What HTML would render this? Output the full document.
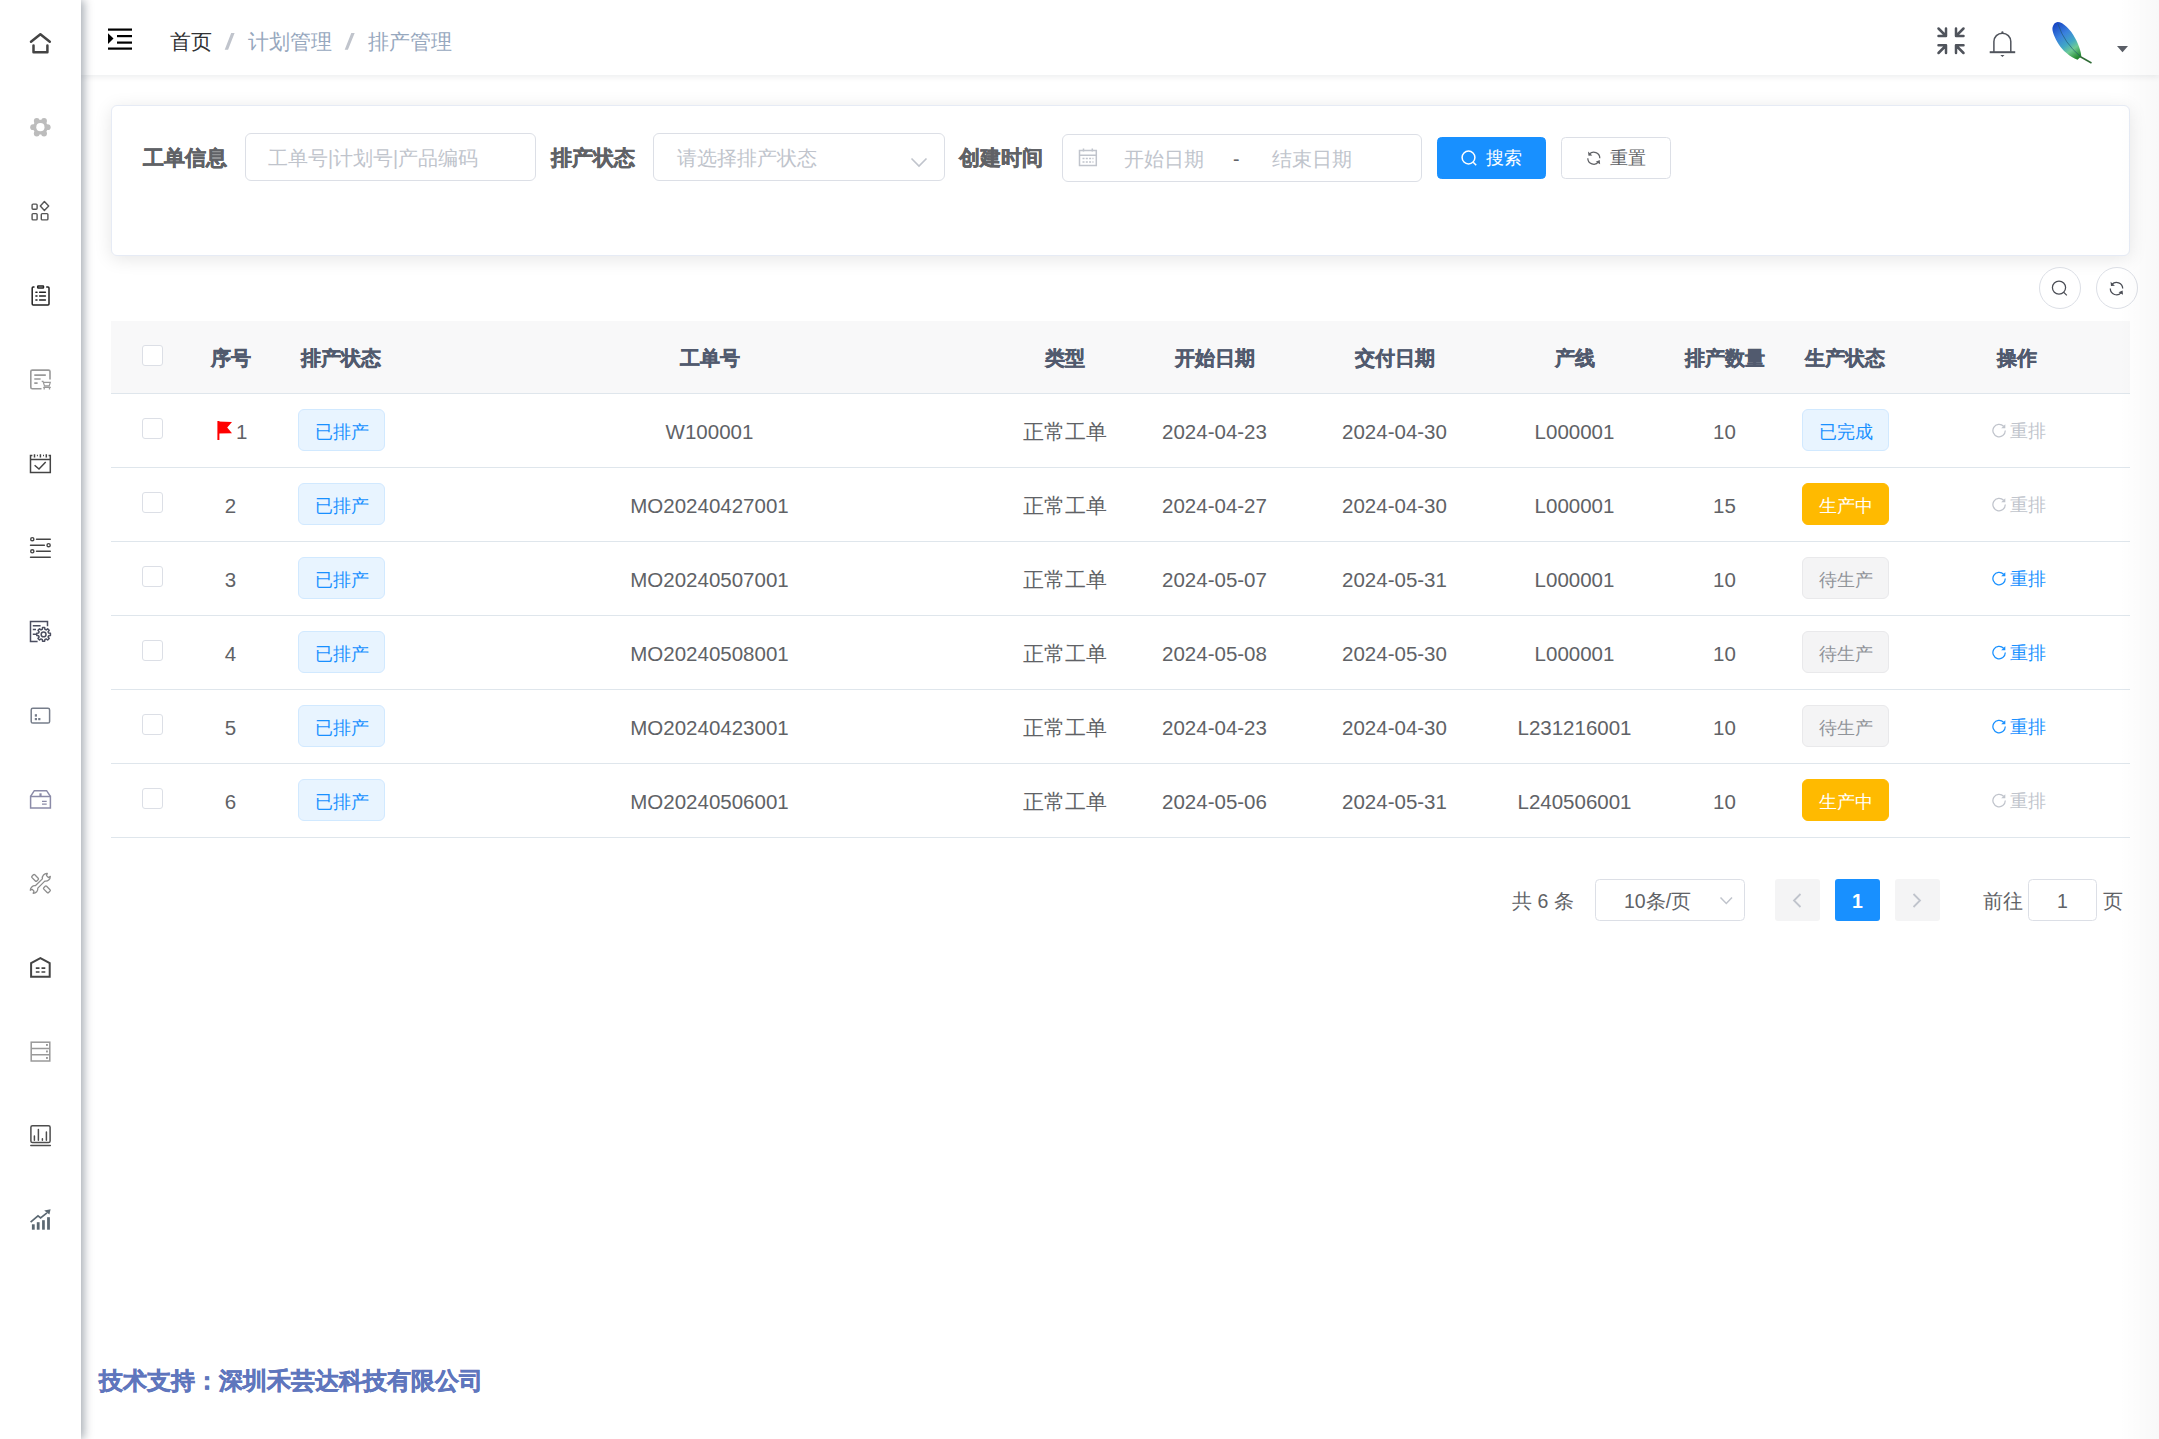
<!DOCTYPE html>
<html><head><meta charset="utf-8">
<style>
*{box-sizing:border-box;margin:0;padding:0}
html,body{width:2159px;height:1439px;overflow:hidden;background:#fff;font-family:"Liberation Sans",sans-serif;color:#606266}
.a{position:absolute}
#side{left:0;top:0;width:81px;height:1439px;background:#fff;box-shadow:3px 0 9px rgba(0,21,41,.35);z-index:5}
#nav{left:81px;top:0;width:2078px;height:75px;background:#fff;box-shadow:0 1.5px 6px rgba(0,21,41,.08);z-index:3}
.ic{z-index:6}
.bc{font-size:21px;top:28px;line-height:28px;white-space:nowrap;z-index:4}
.sl{color:#c0c4cc;font-weight:bold}
#card{left:111px;top:105px;width:2019px;height:150.5px;border:1.5px solid #e6ebf5;border-radius:6px;background:#fff;box-shadow:0 3px 18px rgba(0,0,0,.1)}
.lbl{font-size:21px;font-weight:bold;-webkit-text-stroke:0.45px #606266;color:#606266;top:144px;line-height:28px;white-space:nowrap}
.inp{top:133px;height:48px;border:1.5px solid #dcdfe6;border-radius:6px;background:#fff}
.ph{font-size:19.5px;color:#c0c4cc;line-height:28px;white-space:nowrap}
.btn{top:137px;height:42px;border-radius:4.5px}
.bt{top:144px;font-size:18px;line-height:28px;white-space:nowrap}
.circ{top:267px;width:42px;height:42px;border:1.5px solid #dcdfe6;border-radius:50%;background:#fff}
#thead{left:111px;top:321px;width:2019px;height:73px;background:#f8f8f9;border-bottom:1.5px solid #dfe6ec}
.rowline{left:111px;width:2019px;height:1.5px;background:#dfe6ec}
.th{font-size:19.5px;font-weight:bold;-webkit-text-stroke:0.45px #515a6e;color:#515a6e;line-height:28px;white-space:nowrap;text-align:center;width:240px}
.td{font-size:20.5px;color:#606266;line-height:28px;white-space:nowrap;text-align:center;width:240px}
.cb{left:142px;width:21px;height:21px;border:1.5px solid #dcdfe6;border-radius:3px;background:#fff}
.tag{height:42px;border-radius:6px;font-size:18px;line-height:40px;padding-top:1.5px;text-align:center;white-space:nowrap;width:87px;border:1.5px solid}
.tp{background:#e8f4ff;border-color:#d1e9ff;color:#1890ff}
.tw{background:#ffba00;border-color:#ffba00;color:#fff}
.ti{background:#f4f4f5;border-color:#e9e9eb;color:#909399}
.op{font-size:18px;line-height:28px;white-space:nowrap}
.pg{font-size:19.5px;color:#606266;line-height:28px;white-space:nowrap}

</style></head><body>

<div id="side" class="a"></div>
<div id="nav" class="a"></div>

<svg class="a ic" style="left:0;top:0;pointer-events:none" width="2159" height="1439" viewBox="0 0 2159 1439">
<g transform="translate(20,23)" fill="none" stroke="#444" stroke-width="2.5" stroke-linecap="round" stroke-linejoin="round"><path d="M11 18.7 L20.4 11.2 L29.8 18.7"/><path d="M13.5 22.6 V29.3 H27.4 V22.6"/></g>
<g transform="translate(20,107)" fill="#bcbcbc"><circle cx="20.4" cy="20.2" r="7.4"/><circle cx="27.70" cy="20.20" r="2.9"/><circle cx="24.05" cy="26.52" r="2.9"/><circle cx="16.75" cy="26.52" r="2.9"/><circle cx="13.10" cy="20.20" r="2.9"/><circle cx="16.75" cy="13.88" r="2.9"/><circle cx="24.05" cy="13.88" r="2.9"/><circle cx="20.4" cy="20.2" r="4.1" fill="#fff"/></g>
<g transform="translate(20,191)" fill="none" stroke="#555" stroke-width="1.4" stroke-linejoin="round"><rect x="12.1" y="13.1" width="5" height="5.1" rx="1"/><path d="M20.3 15 L24.4 10.6 L28.7 15 L24.4 19.4 Z"/><rect x="12.1" y="22.6" width="5" height="6.3" rx="1"/><rect x="21.3" y="22.6" width="6.6" height="6.3" rx="1"/></g>
<g transform="translate(20,275)" fill="none" stroke="#222" stroke-width="1.5"><path d="M14.5 11.9 H13.2 Q12.2 11.9 12.2 12.9 V29 Q12.2 30 13.2 30 H28 Q29 30 29 29 V12.9 Q29 11.9 28 11.9 H26.2"/><rect x="17.7" y="11" width="5.8" height="1.9" rx="0.5"/><path d="M15.9 17.3 H17 M19.6 17.3 H25.4 M15.9 21.1 H17 M19.6 21.1 H25.4 M15.9 25 H17 M19.6 25 H25.4" stroke-linecap="round"/></g>
<g transform="translate(20,359)" fill="none" stroke="#9a9a9a" stroke-width="1.6"><path d="M21.5 29.7 H12.3 Q10.8 29.7 10.8 28.2 V12.6 Q10.8 11.1 12.3 11.1 H28.5 Q30 11.1 30 12.6 V20.5"/><path d="M14.3 16.1 H25.8 M14.3 20 H20.6 M14.3 24.1 H17.6"/><path d="M21.7 22.3 H23 L24.5 26.9 H29.2 L30.3 23.4 H23.5 M23.3 28.3 H30.8" stroke-width="1.2"/><path d="M24.2 28.3 V30.5 M29.5 28.3 V30.5" stroke-width="1.3"/></g>
<g transform="translate(20,443)" fill="none" stroke="#444" stroke-width="1.5"><path d="M12.4 12.6 H10.5 V29.6 H30.3 V12.6 H28.6"/><path d="M10.5 16.5 H30.3"/><path d="M14.5 11.2 V14.4 M20.4 11.2 V14.4 M26.3 11.2 V14.4 M16.9 12.6 H17.9 M23 12.6 H24"/><path d="M14.6 22.2 L19 26 L25.7 19"/></g>
<g transform="translate(20,527)" fill="none" stroke="#444" stroke-width="1.4" stroke-linecap="round"><path d="M16.5 12.2 H30.3 M10.5 18.2 H24.4 M16.5 24.3 H30.3 M10.5 30.2 H30.3"/><circle cx="12.3" cy="12.2" r="1.6"/><circle cx="28.6" cy="18.2" r="1.6"/><circle cx="12.3" cy="24.3" r="1.6"/></g>
<g transform="translate(20,611)" fill="none" stroke="#4b4e60" stroke-width="1.5"><path d="M17.6 30.4 H10.5 V10.5 H27.5 V15.2"/><path d="M12.8 14.8 H20.6 M12.8 18.6 H16 M12.8 23.2 H16.4"/><path d="M28.40 21.41 L28.62 22.05 L30.42 22.32 L30.42 24.48 L28.62 24.75 L28.40 25.39 L28.10 26.00 L29.18 27.46 L27.66 28.98 L26.20 27.90 L25.59 28.20 L24.95 28.42 L24.68 30.22 L22.52 30.22 L22.25 28.42 L21.61 28.20 L21.00 27.90 L19.54 28.98 L18.02 27.46 L19.10 26.00 L18.80 25.39 L18.58 24.75 L16.78 24.48 L16.78 22.32 L18.58 22.05 L18.80 21.41 L19.10 20.80 L18.02 19.34 L19.54 17.82 L21.00 18.90 L21.61 18.60 L22.25 18.38 L22.52 16.58 L24.68 16.58 L24.95 18.38 L25.59 18.60 L26.20 18.90 L27.66 17.82 L29.18 19.34 L28.10 20.80 Z" stroke-linejoin="round"/><circle cx="23.6" cy="23.4" r="2.4"/></g>
<g transform="translate(20,695)" fill="#767d8a" stroke="none"><rect x="11.2" y="13.3" width="18.4" height="14.7" rx="1.6" fill="none" stroke="#767d8a" stroke-width="1.5"/><rect x="14.8" y="19.2" width="2.2" height="2.4"/><rect x="14.8" y="23" width="2.2" height="2.2"/><rect x="18.2" y="23" width="2.2" height="2.2"/></g>
<g transform="translate(20,779)" fill="none" stroke="#8b8ba8" stroke-width="1.5"><path d="M10.6 17.4 H30.4 V29.1 H10.6 Z"/><path d="M10.6 17.4 L14.3 11.7 H26.6 L30.4 17.4"/><path d="M20.5 14.3 V17.4" stroke-width="2.2"/><path d="M22 22.4 H26.7 M22 25.2 H26.7" stroke-width="1.3"/></g>
<g transform="translate(20,863)" fill="none" stroke="#8c8c8c" stroke-width="1.3" stroke-linejoin="round"><rect x="-3.4" y="-2" width="6.8" height="4" rx="1" transform="translate(15.1 14.9) rotate(45)"/><rect x="-3.4" y="-2" width="6.8" height="4" rx="1" transform="translate(26.9 26.4) rotate(45)"/><path d="M22.4 15.9 A4.6 4.6 0 0 1 27.3 10.5 L26.5 12.6 L28.4 14.5 L30.3 13.4 A4.6 4.6 0 0 1 24.8 18.1 L17.8 25.1 A4.6 4.6 0 0 1 13.2 30.3 L14 28.1 L12.1 26.3 L10.3 27.3 A4.6 4.6 0 0 1 15.3 22.7 Z"/></g>
<g transform="translate(20,947)"><path d="M11.1 29.7 V16 L20.4 11.2 L29.7 16 V29.7 Z" fill="none" stroke="#444" stroke-width="2" stroke-linejoin="miter"/><path d="M15.8 21.1 H19.5 M21.5 21.1 H25.3 M15.8 25 H19.5 M21.5 25 H25.3" stroke="#444" stroke-width="1.6"/></g>
<g transform="translate(20,1031)" fill="none" stroke="#999" stroke-width="1.5"><rect x="11.2" y="11.2" width="18.6" height="18.8"/><path d="M11.2 17.4 H29.8 M11.2 23.7 H29.8"/><g fill="#999" stroke="none"><rect x="26" y="13" width="1.9" height="1.9"/><rect x="26" y="19.5" width="1.9" height="1.9"/><rect x="26" y="26" width="1.9" height="1.9"/></g></g>
<g transform="translate(20,1115)" fill="none" stroke="#4d4d4d" stroke-width="1.5" stroke-linecap="round"><rect x="10.9" y="10.7" width="19.2" height="16.8" rx="1.6"/><path d="M10.8 30.4 H30.3"/><path d="M14.4 21 V25.3 M18.4 14.5 V25.3 M22.4 23.8 V25.3 M26.4 17.1 V25.3"/></g>
<g transform="translate(20,1199)" fill="#5b6872"><rect x="11.9" y="25.3" width="2.8" height="5.4"/><rect x="16.8" y="23.2" width="2.8" height="7.5"/><rect x="22.1" y="21.2" width="2.7" height="9.5"/><rect x="27.1" y="18.2" width="2.8" height="12.5"/><path d="M10.6 23.2 L18 16.8 L20.6 18.9 L27 13.8" fill="none" stroke="#5b6872" stroke-width="1.7"/><path d="M24.2 11.4 L30.6 10.2 L29.4 15.6 Z"/></g>
<g fill="#000"><rect x="108" y="28.5" width="24" height="2.2"/><rect x="117" y="35" width="15" height="2.2"/><rect x="117" y="41.5" width="15" height="2.2"/><rect x="108" y="47.5" width="24" height="2.2"/><path d="M108 33.2 L113.5 38.6 L108 44 Z"/></g>
<g fill="none" stroke="#50545c" stroke-width="2.5" stroke-linecap="round" stroke-linejoin="round"><path d="M1938.5 28.5 L1945.5 35.5 M1946 28.5 V36 H1938.5"/><path d="M1963.5 28.5 L1956.5 35.5 M1956 28.5 V36 H1963.5"/><path d="M1938.5 53 L1945.5 46 M1946 53 V45.3 H1938.5"/><path d="M1963.5 53 L1956.5 46 M1956 53 V45.3 H1963.5"/></g>
<g fill="none" stroke="#50545c" stroke-width="1.5"><path d="M1993.9 52 V41.6 A8.45 8.45 0 0 1 2010.8 41.6 V52"/><path d="M1989.7 52.2 H2015.2" stroke-width="2"/></g><circle cx="2002.4" cy="32.4" r="1.1" fill="#50545c"/><path d="M2000.3 55 H2004.5 L2002.4 57 Z" fill="#50545c"/>
<path d="M2117 46 H2128 L2122.5 52.3 Z" fill="#5a5e66"/>
<defs><linearGradient id="fg" gradientUnits="userSpaceOnUse" x1="2055" y1="24" x2="2080" y2="59"><stop offset="0" stop-color="#1846c4"/><stop offset="0.3" stop-color="#3a80de"/><stop offset="0.55" stop-color="#41a8c4"/><stop offset="0.72" stop-color="#6fcb94"/><stop offset="0.88" stop-color="#3a9c4a"/><stop offset="1" stop-color="#187a22"/></linearGradient></defs>
<path d="M2057.6 22.1 C2063 22 2071 30 2075 38 C2079 45 2081 52 2081.3 56.3 L2077.5 59.7 C2070 57 2062 50 2058.5 44 C2055 38 2051.5 31 2052.6 27 C2053.5 24 2055.5 22.2 2057.6 22.1 Z" fill="url(#fg)"/>
<path d="M2058 24 Q2064 43 2081 57" fill="none" stroke="#1e5670" stroke-width="0.8" opacity="0.8"/><path d="M2080 56.5 L2091.5 63" fill="none" stroke="#2f6b35" stroke-width="1.5"/>
<path d="M911.5 158.5 L919 166 L926.5 158.5" fill="none" stroke="#c0c4cc" stroke-width="1.6"/>
<g fill="none" stroke="#c0c4cc" stroke-width="1.5"><rect x="1079.5" y="150.5" width="16.8" height="15"/><path d="M1079.5 155.2 H1096.3 M1083.5 148.5 V151.5 M1092.3 148.5 V151.5"/><path d="M1082.5 158.5 H1093.5 M1082.5 162 H1093.5" stroke-dasharray="2 1.3"/></g>
<g fill="none" stroke="#fff" stroke-width="1.5"><circle cx="1468.5" cy="157.5" r="6.4"/><path d="M1473.2 162.2 L1476.2 165.2"/></g>
<g fill="none" stroke="#4a4d55" stroke-width="1.25"><circle cx="2059" cy="287.6" r="6.6"/><path d="M2063.8 292.4 L2066.8 295.4"/></g>
<g fill="none" stroke="#4a4d55" stroke-width="1.25"><path d="M2111.89 284.45 A6.2 6.2 0 0 1 2122.70 288.60"/><path d="M2110.30 288.60 A6.2 6.2 0 0 0 2121.39 292.42"/></g><path d="M2110.59 281.85 L2110.99 286.05 L2114.89 285.65 Z" fill="#4a4d55"/><path d="M2122.99 294.82 L2122.59 290.52 L2118.59 292.22 Z" fill="#4a4d55"/>
<g fill="none" stroke="#606266" stroke-width="1.25"><path d="M1589.34 154.19 A6.0 6.0 0 0 1 1599.80 158.20"/><path d="M1587.80 158.20 A6.0 6.0 0 0 0 1598.53 161.89"/></g><path d="M1588.04 151.59 L1588.44 155.79 L1592.34 155.39 Z" fill="#606266"/><path d="M1600.13 164.29 L1599.73 159.99 L1595.73 161.69 Z" fill="#606266"/>
<path d="M1800.5 894 L1794 900.5 L1800.5 907" fill="none" stroke="#c0c4cc" stroke-width="1.8"/>
<path d="M1913.5 894 L1920 900.5 L1913.5 907" fill="none" stroke="#c0c4cc" stroke-width="1.8"/>
<path d="M1720.5 897.5 L1726.3 903.5 L1732 897.5" fill="none" stroke="#c0c4cc" stroke-width="1.5"/>
</svg>

<div class="a bc" style="left:170px;color:#303133">首页</div>
<svg class="a" style="left:0;top:0;z-index:6" width="400" height="70"><path d="M224.7 49.7 H228.1 L234.6 33 H231.2 Z M344.7 49.7 H347.9 L354.7 33 H351.3 Z" fill="#c0c4cc"/></svg>
<div class="a bc" style="left:248px;color:#97a8be">计划管理</div>
<div class="a bc" style="left:368px;color:#97a8be">排产管理</div>
<div id="card" class="a"></div>
<div class="a lbl" style="left:143px">工单信息</div>
<div class="a inp" style="left:245px;width:291px"></div>
<div class="a ph" style="left:268px;top:144px">工单号|计划号|产品编码</div>
<div class="a lbl" style="left:551px">排产状态</div>
<div class="a inp" style="left:653px;width:292px"></div>
<div class="a ph" style="left:677px;top:144px">请选择排产状态</div>
<div class="a lbl" style="left:959px">创建时间</div>
<div class="a inp" style="left:1062px;top:134px;width:360px"></div>
<div class="a ph" style="left:1124px;top:145px">开始日期</div>
<div class="a ph" style="left:1233px;top:145px;color:#606266">-</div>
<div class="a ph" style="left:1272px;top:145px">结束日期</div>
<div class="a btn" style="left:1437px;width:109px;background:#1890ff;border:1.5px solid #1890ff"></div>
<div class="a btn" style="left:1561px;width:110px;border:1.5px solid #dcdfe6;background:#fff"></div>
<div class="a bt" style="left:1486px;color:#fff">搜索</div>
<div class="a bt" style="left:1610px;color:#606266">重置</div>
<div class="a circ" style="left:2039px"></div><div class="a circ" style="left:2096px"></div>
<div id="thead" class="a"></div>
<div class="a rowline" style="top:466.5px"></div>
<div class="a rowline" style="top:540.5px"></div>
<div class="a rowline" style="top:614.5px"></div>
<div class="a rowline" style="top:688.5px"></div>
<div class="a rowline" style="top:762.5px"></div>
<div class="a rowline" style="top:836.5px"></div>
<div class="a cb" style="top:345px"></div>
<div class="a th" style="left:110.5px;top:343.5px;">序号</div>
<div class="a th" style="left:221px;top:343.5px;">排产状态</div>
<div class="a th" style="left:589.5px;top:343.5px;">工单号</div>
<div class="a th" style="left:945px;top:343.5px;">类型</div>
<div class="a th" style="left:1094.5px;top:343.5px;">开始日期</div>
<div class="a th" style="left:1274.5px;top:343.5px;">交付日期</div>
<div class="a th" style="left:1454.5px;top:343.5px;">产线</div>
<div class="a th" style="left:1604.5px;top:343.5px;">排产数量</div>
<div class="a th" style="left:1725px;top:343.5px;">生产状态</div>
<div class="a th" style="left:1897px;top:343.5px;">操作</div>
<div class="a cb" style="top:418px"></div>
<svg class="a" style="left:217px;top:421px" width="16" height="20" viewBox="0 0 16 20"><rect x="0.4" y="0" width="2" height="19" fill="#f00"/><path d="M1 0.5 L15 0.9 L10.2 6.6 L15 12.2 L1 12.5 Z" fill="#f00"/></svg>
<div class="a td" style="left:236px;top:418px;width:auto;text-align:left">1</div>
<div class="a tag tp" style="left:298px;top:409px">已排产</div>
<div class="a td" style="left:589.5px;top:418px;">W100001</div>
<div class="a td" style="left:945px;top:418px;">正常工单</div>
<div class="a td" style="left:1094.5px;top:418px;">2024-04-23</div>
<div class="a td" style="left:1274.5px;top:418px;">2024-04-30</div>
<div class="a td" style="left:1454.5px;top:418px;">L000001</div>
<div class="a td" style="left:1604.5px;top:418px;">10</div>
<div class="a tag tp" style="left:1802px;top:409px">已完成</div>
<svg class="a" style="left:1992px;top:423px" width="15" height="15" viewBox="0 0 15 15"><path d="M11.6 3.3 A6.2 6.2 0 1 0 13.3 7.6" fill="none" stroke="#c0c4cc" stroke-width="1.25"/><path d="M13.3 1.2 L13.3 5.3 L9.2 5.3 Z" fill="#c0c4cc"/></svg>
<div class="a op" style="left:2009.5px;top:417px;color:#c0c4cc">重排</div>
<div class="a cb" style="top:492px"></div>
<div class="a td" style="left:110.5px;top:492px;">2</div>
<div class="a tag tp" style="left:298px;top:483px">已排产</div>
<div class="a td" style="left:589.5px;top:492px;">MO20240427001</div>
<div class="a td" style="left:945px;top:492px;">正常工单</div>
<div class="a td" style="left:1094.5px;top:492px;">2024-04-27</div>
<div class="a td" style="left:1274.5px;top:492px;">2024-04-30</div>
<div class="a td" style="left:1454.5px;top:492px;">L000001</div>
<div class="a td" style="left:1604.5px;top:492px;">15</div>
<div class="a tag tw" style="left:1802px;top:483px">生产中</div>
<svg class="a" style="left:1992px;top:497px" width="15" height="15" viewBox="0 0 15 15"><path d="M11.6 3.3 A6.2 6.2 0 1 0 13.3 7.6" fill="none" stroke="#c0c4cc" stroke-width="1.25"/><path d="M13.3 1.2 L13.3 5.3 L9.2 5.3 Z" fill="#c0c4cc"/></svg>
<div class="a op" style="left:2009.5px;top:491px;color:#c0c4cc">重排</div>
<div class="a cb" style="top:566px"></div>
<div class="a td" style="left:110.5px;top:566px;">3</div>
<div class="a tag tp" style="left:298px;top:557px">已排产</div>
<div class="a td" style="left:589.5px;top:566px;">MO20240507001</div>
<div class="a td" style="left:945px;top:566px;">正常工单</div>
<div class="a td" style="left:1094.5px;top:566px;">2024-05-07</div>
<div class="a td" style="left:1274.5px;top:566px;">2024-05-31</div>
<div class="a td" style="left:1454.5px;top:566px;">L000001</div>
<div class="a td" style="left:1604.5px;top:566px;">10</div>
<div class="a tag ti" style="left:1802px;top:557px">待生产</div>
<svg class="a" style="left:1992px;top:571px" width="15" height="15" viewBox="0 0 15 15"><path d="M11.6 3.3 A6.2 6.2 0 1 0 13.3 7.6" fill="none" stroke="#1890ff" stroke-width="1.25"/><path d="M13.3 1.2 L13.3 5.3 L9.2 5.3 Z" fill="#1890ff"/></svg>
<div class="a op" style="left:2009.5px;top:565px;color:#1890ff">重排</div>
<div class="a cb" style="top:640px"></div>
<div class="a td" style="left:110.5px;top:640px;">4</div>
<div class="a tag tp" style="left:298px;top:631px">已排产</div>
<div class="a td" style="left:589.5px;top:640px;">MO20240508001</div>
<div class="a td" style="left:945px;top:640px;">正常工单</div>
<div class="a td" style="left:1094.5px;top:640px;">2024-05-08</div>
<div class="a td" style="left:1274.5px;top:640px;">2024-05-30</div>
<div class="a td" style="left:1454.5px;top:640px;">L000001</div>
<div class="a td" style="left:1604.5px;top:640px;">10</div>
<div class="a tag ti" style="left:1802px;top:631px">待生产</div>
<svg class="a" style="left:1992px;top:645px" width="15" height="15" viewBox="0 0 15 15"><path d="M11.6 3.3 A6.2 6.2 0 1 0 13.3 7.6" fill="none" stroke="#1890ff" stroke-width="1.25"/><path d="M13.3 1.2 L13.3 5.3 L9.2 5.3 Z" fill="#1890ff"/></svg>
<div class="a op" style="left:2009.5px;top:639px;color:#1890ff">重排</div>
<div class="a cb" style="top:714px"></div>
<div class="a td" style="left:110.5px;top:714px;">5</div>
<div class="a tag tp" style="left:298px;top:705px">已排产</div>
<div class="a td" style="left:589.5px;top:714px;">MO20240423001</div>
<div class="a td" style="left:945px;top:714px;">正常工单</div>
<div class="a td" style="left:1094.5px;top:714px;">2024-04-23</div>
<div class="a td" style="left:1274.5px;top:714px;">2024-04-30</div>
<div class="a td" style="left:1454.5px;top:714px;">L231216001</div>
<div class="a td" style="left:1604.5px;top:714px;">10</div>
<div class="a tag ti" style="left:1802px;top:705px">待生产</div>
<svg class="a" style="left:1992px;top:719px" width="15" height="15" viewBox="0 0 15 15"><path d="M11.6 3.3 A6.2 6.2 0 1 0 13.3 7.6" fill="none" stroke="#1890ff" stroke-width="1.25"/><path d="M13.3 1.2 L13.3 5.3 L9.2 5.3 Z" fill="#1890ff"/></svg>
<div class="a op" style="left:2009.5px;top:713px;color:#1890ff">重排</div>
<div class="a cb" style="top:788px"></div>
<div class="a td" style="left:110.5px;top:788px;">6</div>
<div class="a tag tp" style="left:298px;top:779px">已排产</div>
<div class="a td" style="left:589.5px;top:788px;">MO20240506001</div>
<div class="a td" style="left:945px;top:788px;">正常工单</div>
<div class="a td" style="left:1094.5px;top:788px;">2024-05-06</div>
<div class="a td" style="left:1274.5px;top:788px;">2024-05-31</div>
<div class="a td" style="left:1454.5px;top:788px;">L240506001</div>
<div class="a td" style="left:1604.5px;top:788px;">10</div>
<div class="a tag tw" style="left:1802px;top:779px">生产中</div>
<svg class="a" style="left:1992px;top:793px" width="15" height="15" viewBox="0 0 15 15"><path d="M11.6 3.3 A6.2 6.2 0 1 0 13.3 7.6" fill="none" stroke="#c0c4cc" stroke-width="1.25"/><path d="M13.3 1.2 L13.3 5.3 L9.2 5.3 Z" fill="#c0c4cc"/></svg>
<div class="a op" style="left:2009.5px;top:787px;color:#c0c4cc">重排</div>
<div class="a pg" style="left:1512px;top:887px">共 6 条</div>
<div class="a" style="left:1595px;top:879px;width:150px;height:42px;border:1.5px solid #dcdfe6;border-radius:4.5px"></div>
<div class="a pg" style="left:1624px;top:887px">10条/页</div>
<div class="a" style="left:1775px;top:879px;width:45px;height:42px;background:#f4f4f5;border-radius:3px"></div>
<div class="a" style="left:1835px;top:879px;width:45px;height:42px;background:#1890ff;border-radius:3px"></div>
<div class="a" style="left:1895px;top:879px;width:45px;height:42px;background:#f4f4f5;border-radius:3px"></div>
<div class="a pg" style="left:1835px;top:887px;width:45px;text-align:center;color:#fff;font-weight:bold">1</div>
<div class="a pg" style="left:1983px;top:887px">前往</div>
<div class="a" style="left:2028px;top:879px;width:69px;height:42px;border:1.5px solid #dcdfe6;border-radius:4.5px"></div>
<div class="a pg" style="left:2028px;top:887px;width:69px;text-align:center">1</div>
<div class="a pg" style="left:2103px;top:887px">页</div>
<div class="a" style="left:99px;top:1366px;font-size:24px;font-weight:bold;color:#5f76bd;-webkit-text-stroke:0.5px #5f76bd;line-height:30px;white-space:nowrap">技术支持：深圳禾芸达科技有限公司</div>
<div class="a" style="left:2119px;top:0;width:40px;height:1439px;background:linear-gradient(to right,rgba(0,0,0,0),rgba(0,0,0,0.028));z-index:20;pointer-events:none"></div>

</body></html>
